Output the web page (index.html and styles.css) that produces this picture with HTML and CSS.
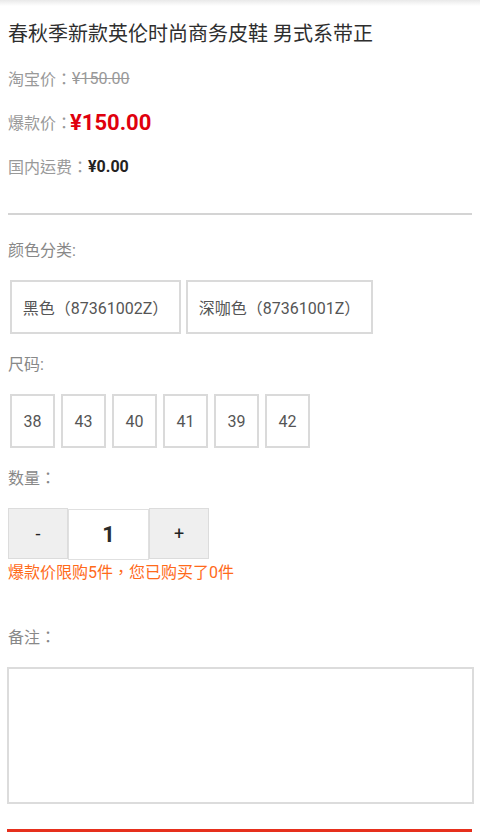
FILE: index.html
```html
<!DOCTYPE html>
<html lang="zh-CN">
<head>
    <meta charset="UTF-8">
    <meta name="viewport" content="width=device-width, initial-scale=1.0">
    <title>商品详情</title>
    <link rel="stylesheet" href="styles.css">
</head>
<body>
    <div class="top-shadow"></div>
    <div class="container">
        <h1 class="title">春秋季新款英伦时尚商务皮鞋 男式系带正</h1>

        <!-- zh-Hant: keeps full-width colon / comma centred in their cell -->
        <div class="price-row">
            <span class="label" lang="zh-Hant">淘宝价：</span>
            <span class="old-price">¥150.00</span>
        </div>
        <div class="price-row">
            <span class="label" lang="zh-Hant">爆款价：</span>
            <span class="hot-price">¥150.00</span>
        </div>
        <div class="price-row">
            <span class="label" lang="zh-Hant">国内运费：</span>
            <span class="freight">¥0.00</span>
        </div>

        <div class="divider"></div>

        <div class="section-label">颜色分类:</div>
        <div class="options">
            <div class="option color-option">黑色（87361002Z）</div>
            <div class="option color-option">深咖色（87361001Z）</div>
        </div>

        <div class="section-label">尺码:</div>
        <div class="options" id="sizeList"></div>

        <div class="section-label" lang="zh-Hant">数量：</div>
        <div class="stepper">
            <button class="step-btn" onclick="changeQty(-1)">-</button>
            <div class="qty" id="qty">1</div>
            <button class="step-btn" onclick="changeQty(1)">+</button>
        </div>
        <div class="limit-tip" lang="zh-Hant">爆款价限购5件，您已购买了0件</div>

        <div class="section-label remark-label" lang="zh-Hant">备注：</div>
        <textarea class="remark"></textarea>

        <button class="buy-btn" aria-label="确定"></button>
    </div>

    <script>
        // Fill size boxes
        const sizes = ["38", "43", "40", "41", "39", "42"];
        const sizeList = document.getElementById("sizeList");
        sizes.forEach(size => {
            let box = document.createElement("div");
            box.className = "option size-option";
            box.textContent = size;
            sizeList.appendChild(box);
        });

        function changeQty(step) {
            let qtyBox = document.getElementById("qty");
            let value = parseInt(qtyBox.textContent) + step;
            if (value < 1) value = 1;
            if (value > 5) value = 5;
            qtyBox.textContent = value;
        }
    </script>
</body>
</html>
```

FILE: styles.css
```css
body {
    margin: 0;
    font-family: Roboto, "Noto Sans CJK SC", sans-serif;
    background: #fff;
    color: #333;
}
.top-shadow {
    height: 6px;
    background: linear-gradient(#e9e9e9, #fff);
}
.container {
    padding: 0 8px;
}
.title {
    margin: 13px 0 0;
    font-size: 20px;
    font-weight: normal;
    line-height: 30px;
    color: #2e2e2e;
    white-space: nowrap;
}
.price-row {
    display: flex;
    align-items: center;
    height: 30px;
    margin-top: 14px;
    font-size: 16px;
}
[lang="zh-Hant"] {
    font-family: Roboto, "Noto Sans CJK TC", sans-serif;
}
.label {
    color: #999;
}
.old-price {
    color: #999;
    text-decoration: line-through;
}
.hot-price {
    margin-left: -2px;
    color: #e0000d;
    font-size: 22px;
    font-weight: bold;
}
.freight {
    color: #222;
    font-weight: bold;
}
.divider {
    margin-top: 32px;
    border-top: 2px solid #d4d4d4;
}
.section-label {
    margin-top: 19px;
    font-size: 16px;
    line-height: 24px;
    color: #888;
}
.divider + .section-label {
    margin-top: 24px;
}
.options {
    display: flex;
    gap: 6px;
    margin: 17px 0 0 2px;
}
.option {
    display: flex;
    align-items: center;
    justify-content: center;
    box-sizing: border-box;
    height: 54px;
    border: 2px solid #dadada;
    font-size: 16px;
    color: #555;
}
.color-option {
    width: 171px;
}
.color-option + .color-option {
    width: 187px;
    margin-left: -1px;
}
.size-option {
    width: 45px;
}
.stepper {
    display: flex;
    align-items: center;
    margin-top: 16px;
}
.step-btn {
    width: 60px;
    height: 51px;
    padding: 0;
    background: #efefef;
    border: 1px solid #dcdcdc;
    font-family: inherit;
    font-size: 18px;
    color: #222;
}
.qty {
    display: flex;
    align-items: center;
    justify-content: center;
    box-sizing: border-box;
    width: 81px;
    height: 51px;
    margin-top: 2px;
    background: #fff;
    border: 1px solid #e0e0e0;
    font-size: 22px;
    font-weight: bold;
    color: #2a2a2a;
}
.limit-tip {
    margin-top: 1px;
    font-size: 16px;
    line-height: 24px;
    color: #ff6a1a;
}
.remark-label {
    margin-top: 41px;
}
.remark {
    display: block;
    box-sizing: border-box;
    width: 467px;
    height: 137px;
    margin: 17px 0 0 -1px;
    border: 2px solid #dcdcdc;
    resize: none;
}
.buy-btn {
    display: block;
    width: 465px;
    height: 46px;
    margin: 25px 0 0 -1px;
    background: #e6301d;
    border: none;
}
```
